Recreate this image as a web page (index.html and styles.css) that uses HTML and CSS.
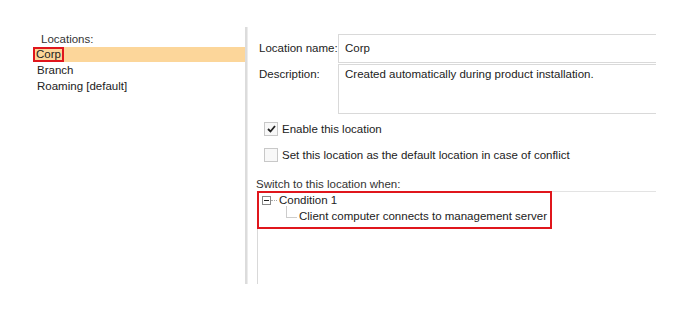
FILE: index.html
```html
<!DOCTYPE html>
<html lang="en">
<head>
    <meta charset="UTF-8">
    <title>Locations</title>
    <link rel="stylesheet" href="styles.css">
</head>
<body>
    <div class="window">
        <div class="locations">
            <div class="locations-label">Locations:</div>
            <ul class="location-list">
                <li class="selected"><span class="mark">Corp</span></li>
                <li>Branch</li>
                <li>Roaming [default]</li>
            </ul>
        </div>

        <div class="divider"></div>

        <div class="details">
            <div class="field">
                <label>Location name:</label>
                <div class="input">Corp</div>
            </div>
            <div class="field multi">
                <label>Description:</label>
                <div class="input textarea">Created automatically during product installation.</div>
            </div>

            <div class="check-row">
                <span class="check checked">
                    <svg width="9" height="8" viewBox="0 0 9 8"><path d="M1 4 L3.5 6.5 L8 1" fill="none" stroke="#222" stroke-width="1.8"/></svg>
                </span>
                Enable this location
            </div>
            <div class="check-row">
                <span class="check"></span>
                Set this location as the default location in case of conflict
            </div>

            <div class="switch-label">Switch to this location when:</div>
            <div class="conditions">
                <div class="tree mark">
                    <div class="node">
                        <span class="toggle"><span class="minus"></span></span>
                        <span class="dots"></span>
                        Condition 1
                    </div>
                    <div class="node child">
                        <span class="elbow"></span>
                        Client computer connects to management server
                    </div>
                </div>
            </div>
        </div>
    </div>
</body>
</html>
```

FILE: styles.css
```css
* {
    margin: 0;
    padding: 0;
    box-sizing: border-box;
}
body {
    background: #fff;
    font-family: 'Liberation Sans', Arial, sans-serif;
    font-size: 11.5px;
    color: #222;
    white-space: nowrap;
}
.window {
    display: flex;
    padding-top: 26px;
    height: 284px;
}
.locations {
    width: 245px;
    padding-top: 6px;
}
.locations-label {
    padding-left: 41px;
    height: 14px;
    line-height: 14px;
    color: #333;
}
.location-list {
    list-style: none;
    margin-top: 1px;
}
.location-list li {
    margin-left: 33px;
    height: 15px;
    line-height: 15px;
    padding-left: 4px;
    margin-bottom: 1px;
}
.location-list li.selected {
    background: #fcd69a;
    padding-left: 0;
}
.mark {
    border: 2px solid #e0161c;
}
.location-list .mark {
    display: inline-block;
    height: 15px;
    line-height: 11px;
    padding: 0 1px;
}
.divider {
    width: 3px;
    margin-top: 1px;
    background: #dcdcdc;
    border-right: 1px solid #ececec;
}
.details {
    width: 408px;
    overflow: hidden;
    padding-left: 8px;
    padding-top: 8px;
    display: flex;
    flex-direction: column;
}
.field {
    display: flex;
    margin-bottom: 1px;
}
.field label {
    width: 82px;
    padding-left: 3px;
    padding-top: 7px;
    line-height: 14px;
}
.field.multi label {
    padding-top: 3px;
}
.input {
    flex: 1;
    height: 29px;
    border: 1px solid #d9d9d9;
    border-right: none;
    padding: 6px 6px;
    line-height: 15px;
}
.input.textarea {
    height: 50px;
    padding-top: 2px;
}
.check-row {
    display: flex;
    align-items: center;
    height: 14px;
    margin-left: 8px;
    margin-top: 7px;
}
.check-row + .check-row {
    margin-top: 12px;
}
.check {
    width: 14px;
    height: 14px;
    border: 1px solid #c8c8c8;
    background: #f8f8f8;
    margin-right: 4px;
    display: flex;
    align-items: center;
    justify-content: center;
}
.switch-label {
    margin-top: 15px;
    line-height: 14px;
    color: #333;
}
.conditions {
    flex: 1;
    margin-top: 0;
    border-top: 1px solid #e3e3e3;
    border-left: 1px solid #d9d9d9;
    margin-left: 1px;
}
.tree {
    width: 295px;
    height: 38px;
    margin-left: -1px;
    margin-top: -1px;
    padding: 0 0 0 3px;
}
.node {
    display: flex;
    align-items: center;
    height: 15px;
    line-height: 15px;
}
.toggle {
    width: 9px;
    height: 9px;
    border: 1px solid #888;
    display: flex;
    align-items: center;
    justify-content: center;
    background: #fff;
}
.minus {
    width: 5px;
    height: 1px;
    background: #222;
}
.dots {
    width: 6px;
    border-top: 1px dotted #aaa;
    margin-right: 2px;
}
.node.child {
    margin-top: 1px;
    padding-left: 24px;
}
.elbow {
    width: 11px;
    height: 12px;
    margin-top: -10px;
    border-left: 1px solid #ccc;
    border-bottom: 1px solid #ccc;
    margin-right: 2px;
}
```
